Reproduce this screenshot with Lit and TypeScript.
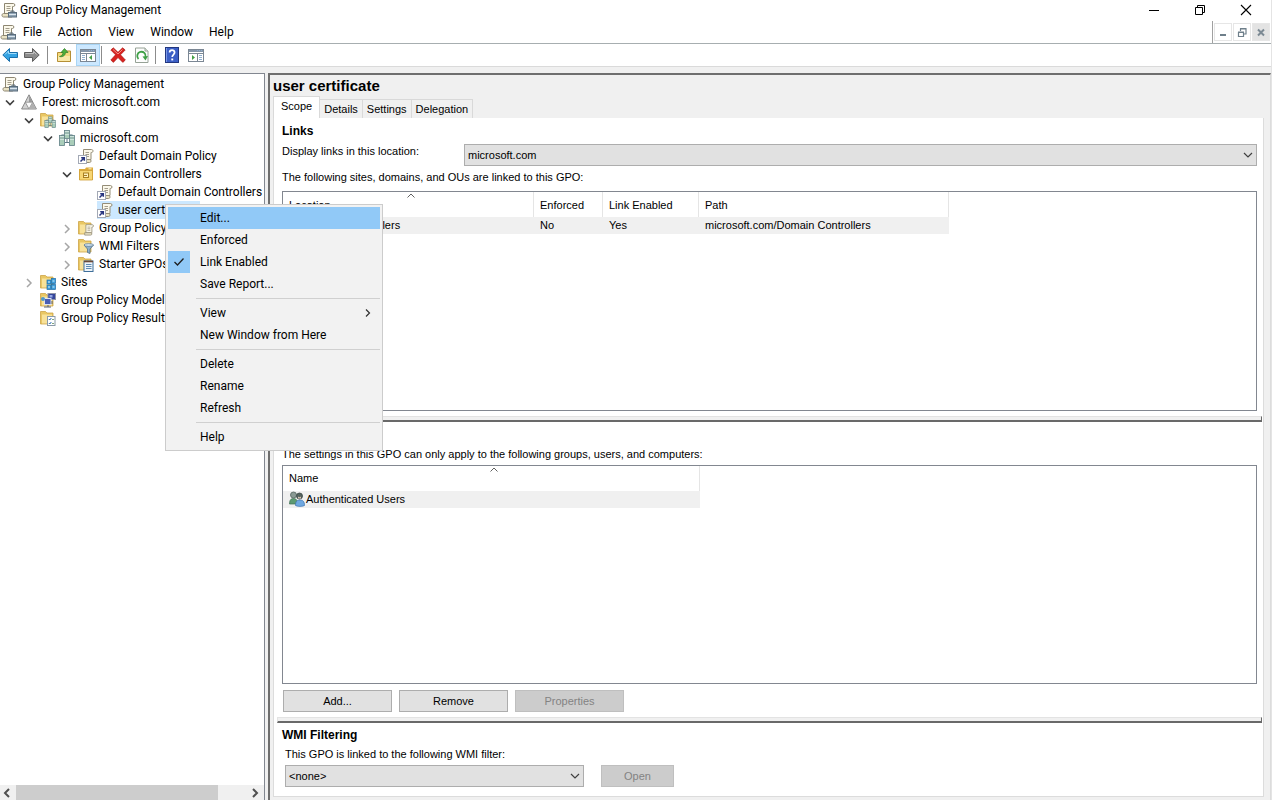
import { LitElement, html, css, svg, nothing, TemplateResult } from 'lit';
import { customElement, property } from 'lit/decorators.js';
import { classMap } from 'lit/directives/class-map.js';

const scroll = svg`
  <path d="M3.500 1.500h9c1.800 0 1.800 3 0 3h-1v8h-8z" fill="#fbf8ea" stroke="#8d8672"/>
  <path d="M2.500 11.500c-2 0-2 3.500 0 3.500h8c1.600 0 1.600-3.500 0-3.500z" fill="#e9e2c4" stroke="#8d8672"/>
  <path d="M5.500 4.500h4M5.500 6.500h4M5.500 8.500h4" stroke="#a39d8c"/>`;
const miniScroll = svg`
  <path d="M5.500 1.500h8c2 0 2 3 0 3h-.5v7h-7.500z" fill="#fbf8ea" stroke="#948d78"/>
  <path d="M7.500 4.500h3.500M7.500 6.500h3.500M7.500 8.500h3.500" stroke="#a39d8c"/>
  <path d="M4 11.500h7.500c2 0 2 3 0 3H4z" fill="#e9e2c4" stroke="#948d78"/>`;
const folder = svg`
  <path d="M.5 1.500h5l1.500 1.500h6v11H.5z" fill="#e9c763"/>
  <path d="M2 4.500h10v9.500H2z" fill="#f8e29a"/>
  <path d="M.5 1.500h5l1.500 1.500h6v11H.5z" fill="none" stroke="#cda548" stroke-width=".8"/>`;
const servers = svg`
  <path d="M5 5h-2.500v4M11 5h2.500v4" stroke="#5d7a86" fill="none"/>
  <g stroke="#5f7f86" stroke-width=".8">
    <rect x="5.500" y=".5" width="5" height="8" fill="#a9cdb9"/>
    <rect x=".5" y="5.500" width="5" height="10" fill="#a9cdb9"/>
    <rect x="10.500" y="5.500" width="5" height="10" fill="#a9cdb9"/>
  </g>
  <path d="M6 2h4M6 4h4M1 7h4M1 9h4M11 7h4M11 9h4" stroke="#f2fbff"/>
  <path d="M6 3h4M1 8h4M11 8h4" stroke="#4e7c72" stroke-width=".8"/>
  <path d="M8 9v4M6 12.500h4" stroke="#5d7a86"/>`;

const icons: Record<string, TemplateResult | unknown> = {
  gpm: svg`${scroll}
    <rect x="7.500" y="10.500" width="8" height="4.500" fill="#8fa3b4" stroke="#5b6d7c"/>
    <path d="M10 10.500v-1.500h3v1.500" fill="none" stroke="#5b6d7c"/><path d="M8 12.500h7" stroke="#dbe6ee"/>`,
  forest: svg`<path d="M8 .8 15.400 15H.6z" fill="#d2d2d2" stroke="#7f7f7f" stroke-width=".9"/>
    <path d="M8 1.500v6.500l3.500-.3z" fill="#9a9a9a"/><path d="M4.300 8.200h7.400L8 15z" fill="#fbfbfb" stroke="#858585" stroke-width=".8"/>
    <path d="m8 15 3.700-6.800L15 15z" fill="#b0b0b0"/>`,
  domains: svg`${folder}<g transform="translate(4.500 4.500) scale(.72)">${servers}</g>`,
  domain: servers,
  link: svg`${miniScroll}<rect x=".5" y="7.500" width="8" height="8" fill="#fff" stroke="#a3a9b5"/>
    <path d="M2.500 13.500 6 10M3.200 9.700h3.100v3.100" stroke="#27357f" stroke-width="1.500" fill="none"/>`,
  ou: svg`<path d="M1 3h6l1-1.500h7V14H1z" fill="#dba93b"/><path d="M1.500 4.500h13V14h-13z" fill="#f7d674" stroke="#cf9f35" stroke-width=".8"/>
    <rect x="5.500" y="7" width="5" height="4.500" fill="#fff1ba" stroke="#a87e22"/><path d="M6 9.500h3" stroke="#a87e22"/><path d="M10.500 2.800h3" stroke="#fff1ba"/>`,
  gpos: svg`${folder}<g transform="translate(3.500 3.500) scale(.8)">${miniScroll}</g>`,
  wmi: svg`${folder}<path d="M6 7h9.500l-3.500 4v4.500l-2.500-1V11z" fill="#8fb1cb" stroke="#4f708c" stroke-width=".8"/>
    <ellipse cx="10.700" cy="7" rx="4.700" ry="1.300" fill="#dcebf5" stroke="#4f708c" stroke-width=".7"/>`,
  starter: svg`${folder}<rect x="6" y="5" width="9" height="10.500" fill="#edf3f8" stroke="#3f6f9a"/>
    <path d="M6 5.500h9" stroke="#6b4938" stroke-width="1.600"/><path d="M8 8.500h5.500M8 10.500h5.500M8 12.500h5.500" stroke="#5e8cb5"/>`,
  sites: svg`${folder}<g fill="#3b9ddb" stroke="#1f6ca5" stroke-width=".7"><rect x="7" y="6" width="4" height="4"/>
    <rect x="11.500" y="4.500" width="4" height="5"/><rect x="7" y="11" width="4" height="4.500"/><rect x="11.500" y="10.500" width="4" height="5"/></g>
    <path d="M8 8h2M12.500 7h2M8 13h2M12.500 13h2" stroke="#d8f0ff"/>`,
  modeling: svg`${folder}<rect x="8" y="1.500" width="7.500" height="6" fill="#35459b" stroke="#8f95a8"/>
    <rect x="9.500" y="3" width="3" height="2.500" fill="#91a6e5"/><rect x="4.500" y="6.500" width="6.500" height="6" fill="#4a5fb4" stroke="#dfe3ee"/>
    <path d="M4 15h7M12 9v3M8 13v2" stroke="#59606f"/><circle cx="3" cy="7" r="2" fill="#4f97c9"/>`,
  results: svg`${folder}<rect x="7.500" y="6.500" width="7.500" height="9" fill="#fff" stroke="#8a9aa8"/>
    <path d="m8.800 9 1 1 1.500-2M8.800 13l1 1 1.500-2" stroke="#2d70b8" fill="none"/><path d="M12 9.500h2M12 13.500h2" stroke="#7fa57f"/>`,
  back: svg`<path d="M7.500 1.500v4h8v5h-8v4L.8 8z" fill="#35a3e3" stroke="#1a6fab"/><path d="M3 7.500 6.500 4v2.500h8" stroke="#a2dcfa" fill="none"/>`,
  forward: svg`<path d="M8.500 1.500v4h-8v5h8v4l6.700-6.500z" fill="#8c8c8c" stroke="#5e5e5e"/><path d="M1.500 6.500h8v-2l3 3" stroke="#c3c3c3" fill="none"/>`,
  up: svg`<path d="M1.500 5.500h5l1-1.500h7v10.500h-13z" fill="#f5d97c" stroke="#b58f35"/><path d="M2 9h12v5H2z" fill="#fae9a8"/>
    <path d="M3.500 9.500c2.500-.5 3.500-2 3.500-4H5l3.500-4 3.500 4h-2.500c0 2.500-2.500 5-6 4z" fill="#4eb13c" stroke="#2c7d26" stroke-width=".7"/>`,
  tree: svg`<rect x=".5" y="2.500" width="15" height="12" fill="#fff" stroke="#7b8794"/><path d="M1 4h14" stroke="#8496aa" stroke-width="2"/>
    <path d="M1 6.500h14M6.500 7v7.500" stroke="#7b8794"/><path d="M2 8.500h3M2 10.500h3M2 12.500h3M9 3.500h1M11 3.500h1M13 3.500h1" stroke="#8fb0d0"/>
    <path d="M12 8v5L9 10.500z" fill="#43a047"/>`,
  actions: svg`<rect x=".5" y="2.500" width="15" height="12" fill="#fff" stroke="#7b8794"/><path d="M1 4h14" stroke="#8496aa" stroke-width="2"/>
    <path d="M1 6.500h14M9.500 7v7.500" stroke="#7b8794"/><path d="M11 8.500h3M11 10.500h3M11 12.500h3M9 3.500h1M11 3.500h1M13 3.500h1" stroke="#8fb0d0"/>
    <path d="M4 8v5l3-2.500z" fill="#43a047"/>`,
  remove: svg`<path d="m.8 3 2.500-2.200L8 5.300 12.600.8 15.200 3l-4.700 4.800 4.900 5.200-2.600 2.400L8 10.600l-4.600 4.800L.8 13l4.700-5.200z" fill="#d8221f" stroke="#a31512" stroke-width=".6"/>
    <path d="m3 2.500 5 4.500 4.500-4.500" stroke="#f08f86" fill="none"/>`,
  refresh: svg`<path d="M1.500 1h9.500l3 3v11.500h-12.500z" fill="#fdfdfd" stroke="#96a296"/><path d="M11 1v3h3" fill="#dfe6df" stroke="#96a296"/>
    <path d="M4.500 12A4.200 4.200 0 1 1 11.500 10" stroke="#3ea046" stroke-width="1.800" fill="none"/><path d="m8.500 9.500 5.500-.5-2.500 4.500z" fill="#3ea046"/>`,
  help: svg`<rect x="1.500" y=".5" width="13" height="15" fill="#3c5fc6" stroke="#22377f"/><path d="M2.500 1v14" stroke="#7c98e6"/>
    <path d="M5.600 5.600c0-3.300 5-3.300 5 0 0 2-2.400 2-2.400 4.500" fill="none" stroke="#fff" stroke-width="1.700"/><path d="M7.300 11.500h1.900v1.900H7.300z" fill="#fff"/>`,
  users: svg`<path d="M.5 13c0-4 1.500-5.500 4-5.500S8.500 9 8.500 13z" fill="#5c9a72" stroke="#3e6e51" stroke-width=".7"/>
    <circle cx="4.500" cy="4" r="3" fill="#8a9a94" stroke="#56655f" stroke-width=".8"/>
    <path d="M6.500 14.500c0-4 1.500-5.500 4.500-5.500s4.500 1.500 4.500 5.500c-2 1.200-7 1.200-9 0z" fill="#6fa8e0" stroke="#3f74b0" stroke-width=".7"/>
    <circle cx="10.500" cy="5" r="3" fill="#55635f" stroke="#3c4945" stroke-width=".8"/><path d="M9 5.500c1 1 2 1 3 0v2H9z" fill="#d9c4b2"/>`,
  min: svg`<path d="M3 8.500h10" stroke="#000"/>`,
  restore: svg`<path d="M3.500 5.500h7v7h-7zM5.500 5.500v-2h7v7h-2" fill="none" stroke="#000"/>`,
  close: svg`<path d="m3 3 10 10M13 3 3 13" stroke="#000" stroke-width="1.100"/>`,
  mdiMin: svg`<path d="M5 11h6" stroke="#6e7f8a" stroke-width="2"/>`,
  mdiRestore: svg`<path d="M4.500 8.500h5v4h-5zM4 8h6M6.500 7V5h5.500v5H10M6 4.500h6.500" fill="none" stroke="#6e7f8a" stroke-width="1.200"/>`,
  mdiClose: svg`<path d="m5 5.500 6 6M11 5.500l-6 6" stroke="#7c8a94" stroke-width="2"/>`,
  open: svg`<path d="m4 6.500 4 4 4-4" fill="none" stroke="#404040" stroke-width="1.700"/>`,
  closed: svg`<path d="m6 5 4 4-4 4" fill="none" stroke="#a6a6a6" stroke-width="1.500"/>`,
  drop: svg`<path d="m4 6 4 4 4-4" fill="none" stroke="#404040" stroke-width="1.200"/>`,
  sort: svg`<path d="m4.500 9.500 3.500-3.500 3.500 3.500" fill="none" stroke="#606060"/>`,
  check: svg`<path d="m3.500 8 3 3 6-6.500" fill="none" stroke="#1f1f1f" stroke-width="1.300"/>`,
  sub: svg`<path d="m6 4.500 3.500 3.500-3.500 3.500" fill="none" stroke="#303030" stroke-width="1.200"/>`,
  left: svg`<path d="M9 4 5 8l4 4" fill="none" stroke="#505050" stroke-width="2"/>`,
  right: svg`<path d="m5 4 4 4-4 4" fill="none" stroke="#505050" stroke-width="2"/>`,
};

@customElement('mmc-icon')
class MmcIcon extends LitElement {
  @property() name = '';
  static styles = css`
    :host { display: block; flex: none; width: 16px; height: 16px; }
    svg { display: block; width: 100%; height: 100%; }
  `;
  render() {
    return html`<svg viewBox="0 0 16 16" aria-hidden="true">${icons[this.name]}</svg>`;
  }
}

interface Node { level: number; icon: string; label: string; state?: 'open' | 'closed'; selected?: boolean; }
const nodes: Node[] = [
  { level: 0, icon: 'gpm', label: 'Group Policy Management' },
  { level: 1, icon: 'forest', label: 'Forest: microsoft.com', state: 'open' },
  { level: 2, icon: 'domains', label: 'Domains', state: 'open' },
  { level: 3, icon: 'domain', label: 'microsoft.com', state: 'open' },
  { level: 4, icon: 'link', label: 'Default Domain Policy' },
  { level: 4, icon: 'ou', label: 'Domain Controllers', state: 'open' },
  { level: 5, icon: 'link', label: 'Default Domain Controllers' },
  { level: 5, icon: 'link', label: 'user certificate', selected: true },
  { level: 4, icon: 'gpos', label: 'Group Policy Objects', state: 'closed' },
  { level: 4, icon: 'wmi', label: 'WMI Filters', state: 'closed' },
  { level: 4, icon: 'starter', label: 'Starter GPOs', state: 'closed' },
  { level: 2, icon: 'sites', label: 'Sites', state: 'closed' },
  { level: 2, icon: 'modeling', label: 'Group Policy Modeling' },
  { level: 2, icon: 'results', label: 'Group Policy Results' },
];

@customElement('mmc-tree')
class MmcTree extends LitElement {
  static styles = css`
    :host { display: flex; flex-direction: column; min-width: 0; overflow: hidden; background: #fff; }
    .list { flex: 1; margin: 0; padding: 1px 0 0; list-style: none; overflow: hidden; }
    .row { display: flex; height: 18px; align-items: center; white-space: nowrap; }
    .slot { display: grid; flex: none; place-items: center start; width: 19px; height: 18px; padding: 0; border: 0; background: none; }
    .label { display: flex; align-items: center; gap: 5px; padding-right: 2px; line-height: 18px; }
    .selected { background: #cce8ff; }
    .bar { display: flex; height: 15px; background: #f0f0f0; }
    .arrow { display: grid; place-items: center; width: 16px; padding: 0; border: 0; background: none; }
    .track { flex: 1; }
    .thumb { width: 87%; height: 100%; background: #cdcdcd; }
  `;
  render() {
    return html`
      <ul class="list" role="tree">
        ${nodes.map((n) => html`
          <li class="row" role="treeitem" style="padding-left:${2 + Math.max(0, n.level - 1) * 19}px">
            ${n.level === 0 ? nothing : n.state
              ? html`<button class="slot" aria-label="Toggle ${n.label}"><mmc-icon name=${n.state}></mmc-icon></button>`
              : html`<span class="slot"></span>`}
            <span class=${classMap({ label: true, selected: !!n.selected })}><mmc-icon name=${n.icon}></mmc-icon>${n.label}</span>
          </li>`)}
      </ul>
      <div class="bar">
        <button class="arrow" aria-label="Scroll left"><mmc-icon name="left"></mmc-icon></button>
        <div class="track"><div class="thumb"></div></div>
        <button class="arrow" aria-label="Scroll right"><mmc-icon name="right"></mmc-icon></button>
      </div>`;
  }
}

const menuItems: Array<{ label: string; hot?: boolean; checked?: boolean; sub?: boolean } | null> = [
  { label: 'Edit...', hot: true }, { label: 'Enforced' }, { label: 'Link Enabled', checked: true }, { label: 'Save Report...' },
  null,
  { label: 'View', sub: true }, { label: 'New Window from Here' },
  null,
  { label: 'Delete' }, { label: 'Rename' }, { label: 'Refresh' },
  null,
  { label: 'Help' },
];

@customElement('mmc-context-menu')
class MmcContextMenu extends LitElement {
  static styles = css`
    :host { display: block; padding: 2px; border: 1px solid #ccc; background: #f2f2f2; }
    .item { display: flex; align-items: center; width: 100%; height: 22px; padding: 0 4px 0 0; border: 0; background: none; font: inherit; color: #000; text-align: left; }
    .hot { background: #91c9f7; }
    .mark { display: grid; place-items: center; width: 22px; height: 22px; margin-right: 10px; }
    .checked { background: #91c9f7; }
    .text { flex: 1; }
    .sep { height: 1px; margin: 3px 0 3px 28px; border: 0; background: #d0d0d0; }
  `;
  render() {
    return html`${menuItems.map((m) => m === null ? html`<hr class="sep">` : html`
      <button class=${classMap({ item: true, hot: !!m.hot })} role="menuitem">
        <span class=${classMap({ mark: true, checked: !!m.checked })}>${m.checked ? html`<mmc-icon name="check"></mmc-icon>` : nothing}</span>
        <span class="text">${m.label}</span>
        ${m.sub ? html`<mmc-icon name="sub"></mmc-icon>` : nothing}
      </button>`)}`;
  }
}

@customElement('gpo-details')
class GpoDetails extends LitElement {
  static styles = css`
    :host { display: flex; flex-direction: column; min-width: 0; min-height: 0; padding: 0 6px 3px 3px; background: #f0f0f0; font: 11px/16px "Liberation Sans", Arial, sans-serif; }
    .title { margin: 0; padding-top: 2px; font-size: 15px; line-height: 18px; font-weight: 700; }
    .tabs { display: flex; align-items: flex-end; height: 23px; }
    .tab { height: 19px; padding: 0 4px; border: 1px solid #d9d9d9; border-width: 1px 1px 0 0; background: #f0f0f0; font: inherit; color: #000; }
    .active { height: 22px; padding: 0 7px 3px; border-left-width: 1px; background: #fff; }
    .page { flex: 1; display: flex; flex-direction: column; min-height: 0; padding: 5px 6px 9px 5px; border: 1px solid #dcdcdc; border-top: 0; background: #fff; }
    h2 { margin: 0 3px; font-size: 12px; line-height: 16px; font-weight: 700; }
    .line { display: flex; align-items: flex-start; margin: 4px 0 0 3px; }
    .where { width: 182px; }
    .note { margin: 3px 3px 0; }
    .combo { display: grid; flex: 1; align-items: center; }
    .drop { margin-top: 1px; }
    .narrow { flex: none; width: 299px; }
    .combo select { grid-area: 1 / 1; width: 100%; height: 22px; padding: 0 3px; border: 1px solid #adadad; border-radius: 0; background: #e1e1e1; font: inherit; color: #000; appearance: none; }
    .combo mmc-icon { grid-area: 1 / 1; justify-self: end; margin-right: 1px; pointer-events: none; }
    .box { flex: 1; min-height: 0; margin: 6px 0 0 3px; border: 1px solid #828790; overflow: hidden; }
    .tight { margin-top: 3px; }
    table { border-collapse: separate; border-spacing: 0; table-layout: fixed; }
    .links { width: 666px; }
    .people { width: 417px; }
    th { box-sizing: border-box; height: 25px; padding: 0; border-right: 1px solid #e5e5e5; font-weight: 400; text-align: left; vertical-align: top; }
    .head { display: grid; height: 25px; align-items: center; padding-left: 6px; }
    .head span { grid-area: 1 / 1; }
    .head mmc-icon { grid-area: 1 / 1; place-self: start center; margin-top: -4px; }
    td { height: 17px; padding: 0 0 0 6px; background: #f0f0f0; line-height: 17px; }
    .cell { display: flex; align-items: center; gap: 1px; }
    .wide { width: 251px; } .enf { width: 69px; } .lnk { width: 96px; }
    .splitter { height: 6px; box-sizing: border-box; margin: 5px -5px 0 -2px; border: 1px solid #e3e3e3; border-bottom: 2px solid #696969; border-right: 1px solid #696969; background: #f0f0f0; }
    .after { margin-top: 4px; }
    .lower { margin-top: 4px; }
    .buttons { display: flex; gap: 7px; margin: 6px 0 0 4px; }
    .btn { width: 109px; height: 22px; padding: 0; border: 1px solid #adadad; background: #e1e1e1; font: inherit; color: #000; }
    .btn:disabled { border-color: #bfbfbf; background: #ccc; color: #838383; }
    .indent { margin-left: 6px; }
    .last { margin-top: 3px; }
    .open { width: 73px; margin-left: 17px; }
  `;
  render() {
    return html`
      <h1 class="title">user certificate</h1>
      <div class="tabs" role="tablist">
        ${['Scope', 'Details', 'Settings', 'Delegation'].map((t, i) => html`<button role="tab" class=${classMap({ tab: true, active: i === 0 })}>${t}</button>`)}
      </div>
      <div class="page">
        <h2>Links</h2>
        <div class="line">
          <label class="where" for="where">Display links in this location:</label>
          <div class="combo drop"><select id="where"><option>microsoft.com</option></select><mmc-icon name="drop"></mmc-icon></div>
        </div>
        <div class="note">The following sites, domains, and OUs are linked to this GPO:</div>
        <div class="box">
          <table class="links">
            <thead><tr>
              <th class="wide"><div class="head"><span>Location</span><mmc-icon name="sort"></mmc-icon></div></th>
              <th class="enf"><div class="head"><span>Enforced</span></div></th>
              <th class="lnk"><div class="head"><span>Link Enabled</span></div></th>
              <th><div class="head"><span>Path</span></div></th>
            </tr></thead>
            <tbody><tr>
              <td><div class="cell"><mmc-icon name="ou"></mmc-icon>Domain Controllers</div></td>
              <td>No</td><td>Yes</td><td>microsoft.com/Domain Controllers</td>
            </tr></tbody>
          </table>
        </div>
        <div class="splitter"></div>
        <h2 class="after">Security Filtering</h2>
        <div class="note lower">The settings in this GPO can only apply to the following groups, users, and computers:</div>
        <div class="box tight">
          <table class="people">
            <thead><tr><th><div class="head"><span>Name</span><mmc-icon name="sort"></mmc-icon></div></th></tr></thead>
            <tbody><tr><td><div class="cell"><mmc-icon name="users"></mmc-icon>Authenticated Users</div></td></tr></tbody>
          </table>
        </div>
        <div class="buttons">
          <button class="btn">Add...</button><button class="btn">Remove</button><button class="btn" disabled>Properties</button>
        </div>
        <div class="splitter"></div>
        <h2 class="after">WMI Filtering</h2>
        <label class="note indent" for="wmi">This GPO is linked to the following WMI filter:</label>
        <div class="line indent last">
          <div class="combo narrow"><select id="wmi"><option>&lt;none&gt;</option></select><mmc-icon name="drop"></mmc-icon></div>
          <button class="btn open" disabled>Open</button>
        </div>
      </div>`;
  }
}

@customElement('app-root')
class AppRoot extends LitElement {
  static styles = css`
    :host { position: relative; display: flex; flex-direction: column; height: 100vh; box-sizing: border-box; padding-right: 3px; background: linear-gradient(#e4e4e4, #e4e4e4) right 2px top / 1px 100% no-repeat #fff; color: #000; font: 12px/16px Roboto, "Segoe UI", sans-serif; overflow: hidden; }
    button { padding: 0; border: 0; background: none; font: inherit; color: inherit; }
    .title { display: flex; align-items: center; height: 20px; padding: 0 2px 0 1px; }
    .name { flex: 1; padding-left: 3px; }
    .win { display: grid; place-items: center; width: 46px; height: 18px; }
    .menubar { display: flex; align-items: center; height: 23px; padding-right: 1px; border-bottom: 1px solid #a7aeb0; }
    .menus { display: flex; flex: 1; gap: 16px; padding-left: 7px; }
    .mdi { display: flex; gap: 1px; height: 22px; align-items: center; padding-left: 1px; border-left: 1px solid #a0a0a0; }
    .mdi button { display: grid; place-items: center; width: 18px; height: 18px; border: 1px solid #e6e6e6; box-sizing: border-box; }
    .mdi .off { background: #e3e3e3; }
    .toolbar { display: flex; align-items: center; height: 22px; padding-left: 2px; border-bottom: 1px solid #dadada; }
    .tool { display: grid; place-items: center; width: 24px; height: 22px; }
    .nav { width: 16px; margin-right: 6px; }
    .on { background: #cce8ff; box-shadow: inset 0 0 0 1px #a9d5f5; }
    .gap { width: 1px; height: 18px; margin: 0 4px 0 1px; background: #8c8c8c; }
    .body { flex: 1; display: grid; grid-template-columns: 265px 1fr; gap: 3px; min-height: 0; padding-top: 6px; background: #f0f0f0; }
    mmc-tree { border: 1px solid #828790; border-width: 1px 1px 0 0; }
    gpo-details { border: 2px solid #6e6e6e; border-right: 1px solid #dcdcdc; border-bottom: 0; }
    mmc-context-menu { position: absolute; left: 165px; top: 204px; width: 212px; }
  `;
  tool(name: string, label: string, cls = '') {
    return html`<button class="tool ${cls}" aria-label=${label}><mmc-icon name=${name}></mmc-icon></button>`;
  }
  render() {
    return html`
      <header class="title">
        <mmc-icon name="gpm"></mmc-icon><span class="name">Group Policy Management</span>
        <button class="win" aria-label="Minimize"><mmc-icon name="min"></mmc-icon></button>
        <button class="win" aria-label="Restore"><mmc-icon name="restore"></mmc-icon></button>
        <button class="win" aria-label="Close"><mmc-icon name="close"></mmc-icon></button>
      </header>
      <nav class="menubar">
        <mmc-icon name="gpm"></mmc-icon>
        <div class="menus">${['File', 'Action', 'View', 'Window', 'Help'].map((m) => html`<button>${m}</button>`)}</div>
        <div class="mdi">
          <button aria-label="Minimize child"><mmc-icon name="mdiMin"></mmc-icon></button>
          <button aria-label="Restore child"><mmc-icon name="mdiRestore"></mmc-icon></button>
          <button class="off" aria-label="Close child"><mmc-icon name="mdiClose"></mmc-icon></button>
        </div>
      </nav>
      <div class="toolbar">
        ${this.tool('back', 'Back', 'nav')}${this.tool('forward', 'Forward', 'nav')}
        <span class="gap"></span>
        ${this.tool('up', 'Up one level')}${this.tool('tree', 'Show console tree', 'on')}
        <span class="gap"></span>
        ${this.tool('remove', 'Delete')}${this.tool('refresh', 'Refresh')}
        <span class="gap"></span>
        ${this.tool('help', 'Help')}${this.tool('actions', 'Show action pane')}
      </div>
      <main class="body"><mmc-tree></mmc-tree><gpo-details></gpo-details></main>
      <mmc-context-menu role="menu"></mmc-context-menu>`;
  }
}
